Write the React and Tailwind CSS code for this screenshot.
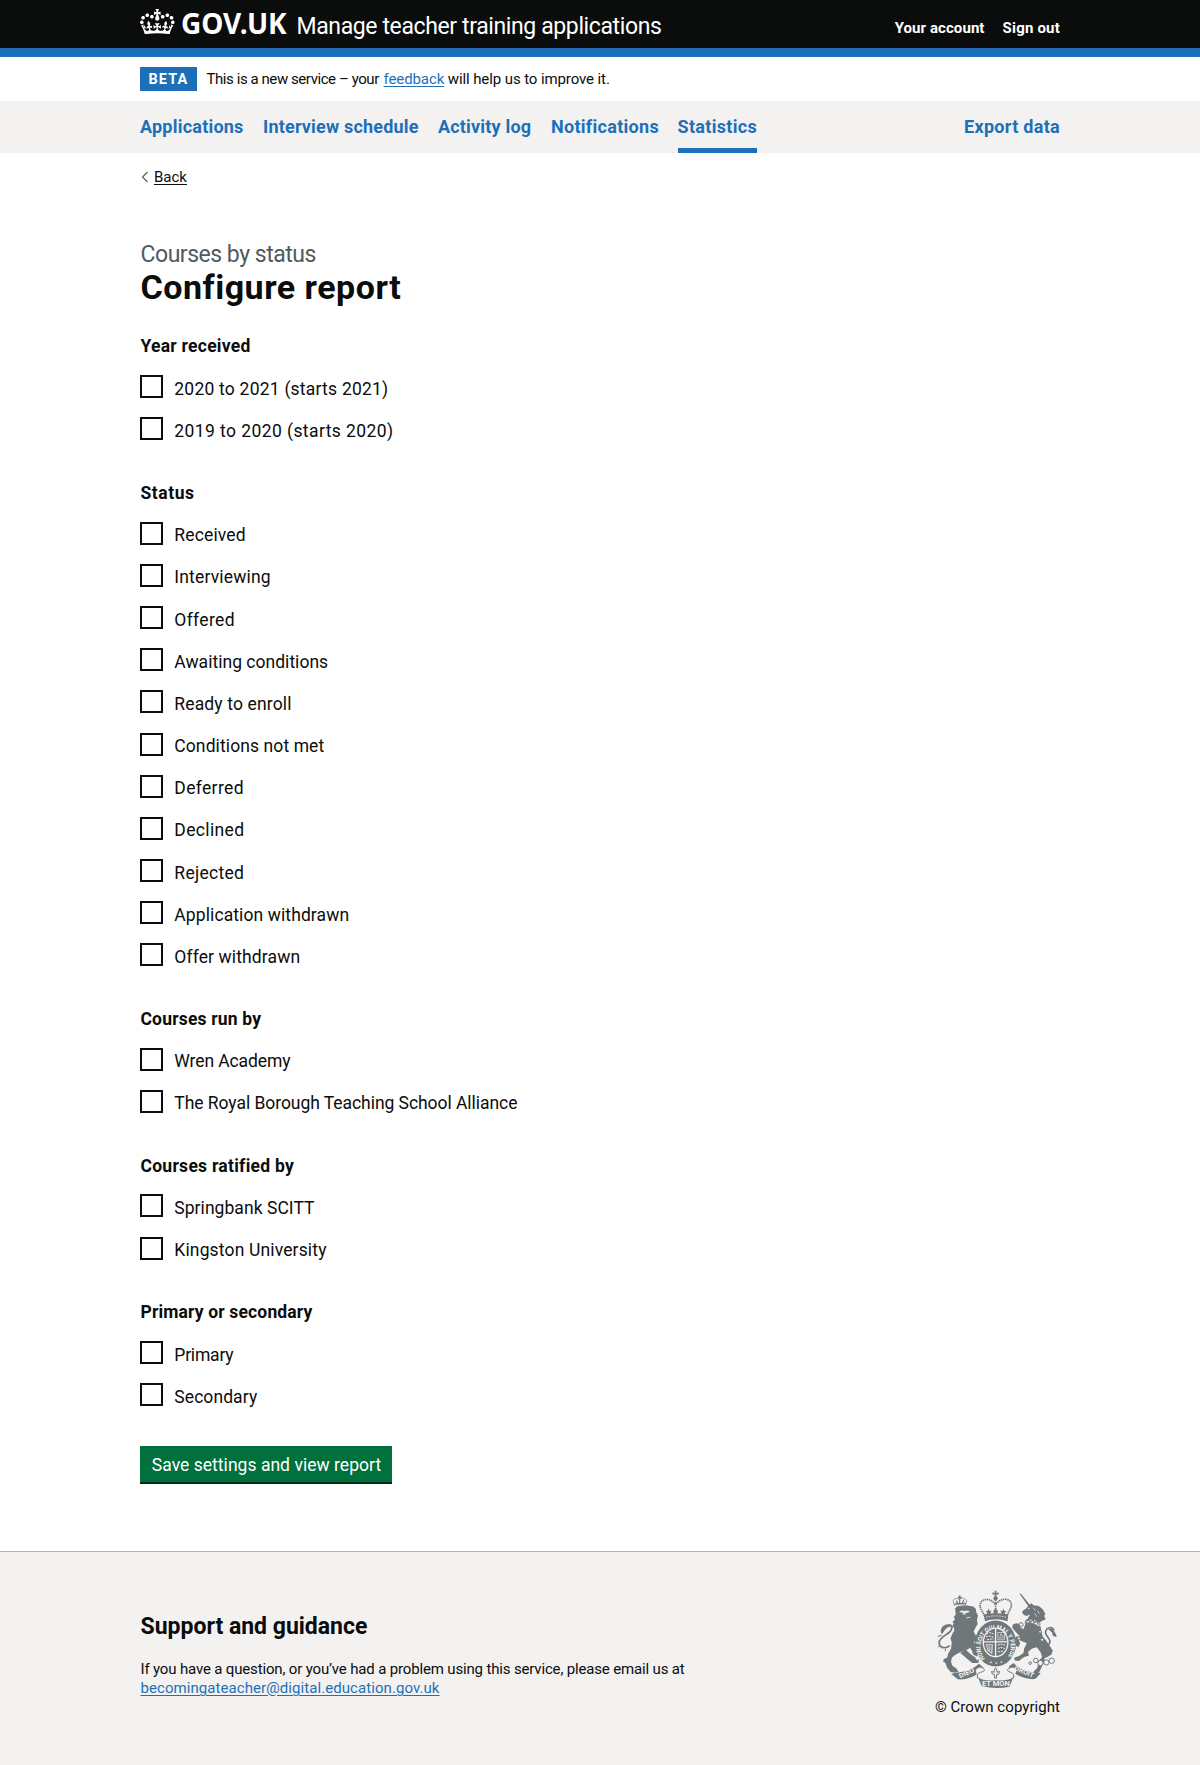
import React from "react";

const navItems = [
  { label: "Applications", cls: "w-[123px] tracking-[0.22px]" },
  { label: "Interview schedule", cls: "w-[175px] tracking-[0.18px]" },
  { label: "Activity log", cls: "w-[113px] tracking-[0.18px]" },
  { label: "Notifications", cls: "w-[126.5px] tracking-[0.28px]" },
  {
    label: "Statistics",
    cls: "w-[79.5px] tracking-[0.32px] shadow-[inset_0_-5px_0_#1d70b8]",
  },
];

const groups = [
  {
    legend: "Year received",
    cls: "tracking-[0.25px]",
    options: [
      ["2020 to 2021 (starts 2021)", "tracking-[0.22px]"],
      ["2019 to 2020 (starts 2020)", "tracking-[0.42px]"],
    ],
  },
  {
    legend: "Status",
    cls: "tracking-[0.54px]",
    options: [
      ["Received", "tracking-[0.15px]"],
      ["Interviewing", "tracking-[0.18px]"],
      ["Offered", "tracking-[0.35px]"],
      ["Awaiting conditions", "tracking-[0.02px]"],
      ["Ready to enroll", "tracking-[0.14px]"],
      ["Conditions not met", "tracking-[0.1px]"],
      ["Deferred", "tracking-[0.35px]"],
      ["Declined", "tracking-[0.35px]"],
      ["Rejected", "tracking-[0.3px]"],
      ["Application withdrawn", "tracking-[0.1px]"],
      ["Offer withdrawn", "tracking-[0.12px]"],
    ],
  },
  {
    legend: "Courses run by",
    cls: "tracking-[0.17px]",
    options: [
      ["Wren Academy", "tracking-[-0.1px]"],
      ["The Royal Borough Teaching School Alliance", "tracking-[-0.05px]"],
    ],
  },
  {
    legend: "Courses ratified by",
    cls: "tracking-[0.27px]",
    options: [
      ["Springbank SCITT", "tracking-[0.05px]"],
      ["Kingston University", "tracking-[0.15px]"],
    ],
  },
  {
    legend: "Primary or secondary",
    cls: "tracking-[0.15px]",
    options: [
      ["Primary", "tracking-[-0.2px]"],
      ["Secondary", "tracking-[0.08px]"],
    ],
  },
];

function Crown() {
  return (
    <svg
      viewBox="0 0 132 97"
      className="-mb-[2.5px] h-[25.5px] w-[34.6px] shrink-0"
      fill="currentColor"
      aria-hidden="true"
    >
      <path
        fillRule="evenodd"
        d="M25 30.2c3.5 1.5 7.7-.2 9.1-3.7 1.5-3.6-.2-7.8-3.9-9.2-3.6-1.4-7.6.3-9.1 3.9-1.4 3.5.3 7.5 3.9 9zM9 39.5c3.6 1.5 7.8-.2 9.2-3.7 1.5-3.6-.2-7.8-3.9-9.1-3.6-1.5-7.6.2-9.1 3.8-1.4 3.5.3 7.5 3.8 9zM4.4 57.2c3.5 1.5 7.7-.2 9.1-3.8 1.5-3.6-.2-7.7-3.9-9.1-3.5-1.5-7.6.3-9.1 3.8-1.4 3.5.3 7.6 3.9 9.1zm38.3-21.4c3.5 1.5 7.7-.2 9.1-3.8 1.5-3.6-.2-7.7-3.9-9.1-3.6-1.5-7.6.3-9.1 3.8-1.3 3.6.4 7.7 3.9 9.1zm64.4-5.6c-3.6 1.5-7.8-.2-9.1-3.7-1.5-3.6.2-7.8 3.8-9.2 3.6-1.4 7.7.3 9.2 3.9 1.3 3.5-.4 7.5-3.9 9zm15.9 9.3c-3.6 1.5-7.7-.2-9.1-3.7-1.5-3.6.2-7.8 3.7-9.1 3.6-1.5 7.7.2 9.2 3.8 1.5 3.5-.3 7.5-3.8 9zm4.7 17.7c-3.6 1.5-7.8-.2-9.2-3.8-1.5-3.6.2-7.7 3.9-9.1 3.6-1.5 7.7.3 9.2 3.8 1.3 3.5-.4 7.6-3.9 9.1zM89.3 35.8c-3.6 1.5-7.8-.2-9.2-3.8-1.4-3.6.2-7.7 3.9-9.1 3.6-1.5 7.7.3 9.2 3.8 1.4 3.6-.3 7.7-3.9 9.1zM69.7 17.7l8.9 4.7V9.3l-8.9 2.8c-.2-.3-.5-.6-.9-.9L72.4 0H59.6l3.5 11.2c-.3.3-.6.5-.9.9l-8.8-2.8v13.1l8.8-4.7c.3.3.6.7.9.9l-5 15.4v.1c-.2.8-.4 1.6-.4 2.4 0 4.1 3.1 7.5 7 8.1h.2c.3 0 .7.1 1 .1.4 0 .7 0 1-.1h.2c4-.6 7.1-4.1 7.1-8.1 0-.8-.1-1.7-.4-2.4V34l-5.1-15.4c.4-.2.7-.6 1-.9zM66 92.8c16.9 0 32.8 1.1 47.1 3.2 4-16.9 8.9-26.7 14-33.5l-9.6-3.4c1 4.9 1.1 7.2 0 10.2-1.5-1.4-3-4.3-4.2-8.7L108.6 76c2.8-2 5-3.2 7.5-3.3-4.4 9.4-10 11.9-13.6 11.2-4.3-.8-6.3-4.6-5.6-7.9 1-4.7 5.7-5.9 8-.5 4.3-8.7-3-11.4-7.6-8.8 7.1-7.2 7.9-13.5 2.1-21.1-8 6.1-8.1 12.3-4.5 20.8-4.7-5.4-12.1-2.5-9.5 6.2 3.4-5.2 7.9-2 7.2 3.1-.6 4.3-6.4 7.8-13.5 7.2-10.3-.9-10.9-8-11.2-13.8 2.5-.5 7.1 1.8 11 7.3L80.2 60c-4.1 4.4-8 5.3-12.3 5.4 1.4-4.4 8-11.6 8-11.6H55.5s6.4 7.2 7.9 11.6c-4.2-.1-8-1-12.3-5.4l1.4 16.4c3.9-5.5 8.5-7.7 10.9-7.3-.3 5.8-.9 12.8-11.1 13.8-7.2.6-12.9-2.9-13.5-7.2-.7-5 3.8-8.3 7.1-3.1 2.7-8.7-4.6-11.6-9.4-6.2 3.7-8.5 3.6-14.7-4.6-20.8-5.8 7.6-5 13.9 2.2 21.1-4.7-2.6-11.9.1-7.7 8.8 2.3-5.5 7.1-4.2 8.1.5.7 3.3-1.3 7.1-5.7 7.9-3.5.7-9-1.8-13.5-11.2 2.5.1 4.7 1.3 7.5 3.3l-4.7-15.4c-1.2 4.4-2.7 7.2-4.3 8.7-1.1-3-.9-5.3 0-10.2l-9.5 3.4c5 6.9 9.9 16.7 14 33.5 14.8-2.1 30.8-3.2 47.7-3.2z"
      />
    </svg>
  );
}

function RoyalArms() {
  const grey = "#6f777b";
  const light = "#f3f2f1";
  return (
    <svg
      viewBox="50 150 362 298"
      className="h-[99px] w-[120.5px]"
      fill={grey}
      stroke="none"
      aria-hidden="true"
    >
      {/* Lion */}
      <path d="M104 206 112 198 136 196 158 200 166 206 168 218 173 227 170 240 172 252 166 262 160 276 166 286 180 292 188 300 182 308 170 304 160 306 168 318 180 330 176 344 170 350 158 344 156 336 150 324 136 332 118 338 104 346 94 354 92 366 96 378 108 386 114 396 104 399 90 396 80 384 74 368 68 366 70 358 80 354 84 340 92 326 94 308 90 296 96 282 102 272 100 262 94 262 100 250 96 246 104 238 100 232 106 224z" />
      <path d="M120 340 136 330 154 346 164 352 170 362 176 356 174 370 156 370 148 364 134 352z" />
      <path d="M118 214l10-3 3 3 8-2 9 2-4 4-8 1-4 4-6-6-8 1z" fill={light} />
      <path d="M126 222l10 1M138 234l12-2" stroke={light} strokeWidth="2.5" fill="none" />
      <path
        d="M88 318C70 330 56 322 56 308 56 294 76 286 86 278 98 268 96 254 84 255"
        fill="none"
        stroke={grey}
        strokeWidth="5"
      />
      <path d="M62 280C58 266 68 254 82 253L92 258 80 264 72 272 66 282z" />
      <path d="M52 290l12-4M58 318l-6 4M76 326l-2 8" stroke={grey} strokeWidth="3" fill="none" />
      {/* Lion's crown */}
      <path d="M102 196 98 182Q104 172 116 178 128 170 139 182L136 194Q118 190 102 196z" fill={light} stroke={grey} strokeWidth="3" strokeDasharray="4 1.5" />
      <path d="M103 192l34-2M118 166v26M112 172h12M108 182l4 8M130 180l-4 9" stroke={grey} strokeWidth="3.5" fill="none" />

      {/* Unicorn */}
      <path d="M297 160 303 162 330 196 325 200z" />
      <path d="M326 196 334 190 340 196 356 198 368 208 376 222 372 228 377 238 364 244 356 250 362 262 364 276 368 290 378 302 388 316 398 332 394 344 382 352 372 356 376 368 368 374 360 392 352 404 344 404 340 396 352 384 354 366 366 352 362 338 350 322 336 326 324 336 326 348 312 352 296 364 284 362 282 354 298 348 310 340 312 326 320 310 306 304 296 300 300 312 294 322 284 316 282 300 288 290 300 290 290 280 276 264 278 254 288 250 298 252 300 262 310 268 314 256 320 240 330 224 318 228 308 222 306 214 318 206z" />
      <path d="M318 240q20-8 42 10l-2 12q-24-18-44-12z" fill={light} stroke={grey} strokeWidth="2.5" />
      <path d="M318 246l8-8 4 9 9-8 3 10 10-5 2 11" fill="none" stroke={grey} strokeWidth="4" />
      <circle cx="326" cy="206" r="2.2" fill={light} />
      <path d="M340 204l6 8M352 212l6 10M344 220l6 10" stroke={light} strokeWidth="2" />
      <path
        d="M380 318C404 304 376 290 376 278 378 262 396 258 402 272"
        fill="none"
        stroke={grey}
        strokeWidth="5"
      />
      <path d="M384 268Q402 260 410 292L398 288 396 278z" />
      <g fill={light} stroke={grey} strokeWidth="3">
        <circle cx="347" cy="362" r="7" />
        <circle cx="361" cy="370" r="8" />
        <circle cx="379" cy="368" r="8" />
        <circle cx="395" cy="363" r="8" />
        <circle cx="366" cy="300" r="4.5" />
        <circle cx="360" cy="276" r="4" />
        <circle cx="303" cy="254" r="6" />
        <circle cx="296" cy="296" r="4.5" />
        <circle cx="330" cy="370" r="4" />
      </g>

      {/* Crown */}
      <path d="M194 228 182 206Q176 184 194 179 210 176 222 192 236 176 256 178 276 182 272 204L258 230Q226 220 194 228z" fill={light} />
      <path
        d="M193 228 181 206Q175 184 194 179 212 176 226 194 240 176 258 178 278 182 272 204L260 228"
        fill="none"
        stroke={grey}
        strokeWidth="5"
        strokeDasharray="4.5 2"
      />
      <path d="M226 180v46" stroke={grey} strokeWidth="5" strokeDasharray="4 2" />
      <circle cx="226" cy="175" r="6.5" />
      <path d="M223 152h6l-1 7 7-2v8l-7-2 1 8h-6l1-8-7 2v-8l7 2z" />
      <path d="M204 206l5 8 5-3-4 9 2 6h-14l3-7-5-6 6 1zM226 204l7 9-3 12h-8l-3-12zM250 206l-4 8-6-3 4 9-2 6h14l-3-7 6-6-6 1z" />
      <path d="M190 224Q226 216 264 224L262 244Q226 232 194 244z" />
      <path d="M197 232Q226 224 257 232" fill="none" stroke={light} strokeWidth="2.5" strokeDasharray="5 3" />

      {/* Garter */}
      <ellipse cx="226" cy="311" rx="62" ry="69" />
      <ellipse cx="226" cy="308" rx="39" ry="45" fill={light} />
      <defs>
        <path id="garter" d="M194 357A45 52 0 1 1 262 353" />
      </defs>
      <text fill={light} fontSize="20" fontWeight="700" fontFamily="Roboto, sans-serif">
        <textPath href="#garter" textLength="222" lengthAdjust="spacingAndGlyphs">
          HONI SOIT QUI MAL Y PENSE
        </textPath>
      </text>
      <circle cx="212" cy="368" r="2.5" fill={light} />
      <circle cx="228" cy="370" r="2.5" fill={light} />
      <circle cx="243" cy="367" r="2.5" fill={light} />
      {/* Quartered shield */}
      <ellipse cx="226" cy="308" rx="35" ry="41" />
      <path d="M226 267v82M191 306h70" stroke={light} strokeWidth="4" />
      <path
        d="M198 282l10-4 12 4M197 291l9-3 14 4M200 299l20-2M233 316l10-3 12 3M233 326l9-3 12 3M233 336l16-2"
        fill="none"
        stroke={light}
        strokeWidth="3"
        strokeDasharray="6 2.5"
      />
      <path d="M233 278h20v22h-20zM238 296l4-14 8 10-9 4" fill="none" stroke={light} strokeWidth="2" />
      <path d="M197 314l20 0-2 28Q200 334 197 314M203 316v18M208 316v22M213 316v24" fill="none" stroke={light} strokeWidth="2" />

      {/* Motto scroll */}
      <path d="M92 402 112 398Q150 396 176 372L190 384 184 394Q150 422 112 419z" />
      <path d="M266 380 280 370Q306 398 362 400L348 416 340 419Q296 416 270 390z" />
      <path
        d="M166 390Q176 376 190 386 198 394 180 398 168 402 172 416M290 390Q280 376 266 386 256 394 272 398 284 402 280 416"
        fill={light}
        stroke={grey}
        strokeWidth="3"
      />
      <path d="M172 410Q180 424 226 422 272 424 280 410L268 441Q226 450 184 439z" />
      <path d="M226 384q6 8 4 14l8-3-2 8-7 2v10h-6v-10l-7-2-2-8 8 3q-2-6 4-14z" fill={light} stroke={grey} strokeWidth="3" />
      <g fill={light} fontWeight="700" fontFamily="Roboto, sans-serif">
        <text x="119" y="416" fontSize="19" textLength="49" lengthAdjust="spacingAndGlyphs" transform="rotate(-24 119 416)">
          DIEU
        </text>
        <text x="185" y="440" fontSize="20" textLength="84" lengthAdjust="spacingAndGlyphs">
          ET MON
        </text>
        <text x="281" y="391" fontSize="19" textLength="62" lengthAdjust="spacingAndGlyphs" transform="rotate(22 281 391)">
          DROIT
        </text>
      </g>
    </svg>
  );
}

function CheckboxGroup({ legend, cls, options }) {
  return (
    <fieldset className="mb-[21.5px]">
      <legend className={"mb-[16.8px] pl-[0.5px] text-[17.5px] leading-[24px] font-bold " + cls}>
        {legend}
      </legend>
      {options.map(([label, tracking]) => (
        <label key={label} className="flex h-[42.17px] items-start">
          <input
            type="checkbox"
            className="h-[23px] w-[23px] shrink-0 appearance-none border-2 border-[#0b0c0c] bg-white"
          />
          <span
            className={
              "mt-[2.5px] ml-[11.3px] text-[17.5px] leading-[23px] whitespace-nowrap " + tracking
            }
          >
            {label}
          </span>
        </label>
      ))}
    </fieldset>
  );
}

export default function App() {
  return (
    <div className="flex min-h-[1765px] flex-col bg-white font-['Roboto',sans-serif] text-[#0b0c0c]">
      <header className="h-[57px] border-b-[9px] border-[#1d70b8] bg-[#0b0c0c] text-white">
        <div className="mx-auto flex w-[920px] justify-between whitespace-nowrap">
          <div className="flex items-baseline pt-[6px]">
            <Crown />
            <span className="ml-[6.5px] w-[115.4px] font-['Noto_Sans',sans-serif] text-[28px] leading-[34px] font-bold tracking-[-0.1px]">
              GOV.UK
            </span>
            <span className="text-[23px] leading-[24px] tracking-[-0.38px]">
              Manage teacher training applications
            </span>
          </div>
          <div className="flex gap-[18px] pt-[18px] text-[15px] leading-[20px] font-bold">
            <a href="#" className="tracking-[0.08px]">Your account</a>
            <a href="#" className="tracking-[0.2px]">Sign out</a>
          </div>
        </div>
      </header>

      <div className="mx-auto flex h-[44px] w-[920px] items-start pt-[10px] text-[15px] whitespace-nowrap">
        <strong className="h-[24px] w-[57px] bg-[#1d70b8] pl-[8.5px] text-[14.5px] leading-[26px] tracking-[1.07px] text-white">
          BETA
        </strong>
        <p className="ml-[9.5px] leading-[25px]">
          <span className="inline-block w-[177px] tracking-[-0.43px]">
            This is a new service – your
          </span>
          <a href="#" className="tracking-[-0.1px] text-[#1d70b8] underline underline-offset-2">
            feedback
          </a>
          <span className="tracking-[-0.1px]"> will help us to improve it.</span>
        </p>
      </div>

      <nav className="h-[52px] bg-[#f3f2f1] text-[18px] leading-[52px] font-bold text-[#1d70b8]">
        <div className="mx-auto flex w-[920px] whitespace-nowrap">
          {navItems.map(({ label, cls }) => (
            <a key={label} href="#" className={"block h-[52px] " + cls}>
              {label}
            </a>
          ))}
          <a href="#" className="ml-auto tracking-[0.3px]">Export data</a>
        </div>
      </nav>

      <main className="mx-auto w-[920px] pt-[13.5px]">
        <a href="#" className="flex h-[20px] items-center text-[15px] leading-[20px]">
          <svg viewBox="0 0 8 12" className="ml-px h-[12px] w-[8px]" fill="none" aria-hidden="true">
            <path d="M6.5 1 1.5 6l5 5" stroke="#505a5f" strokeWidth="1.1" />
          </svg>
          <span className="ml-[5px] underline underline-offset-2">Back</span>
        </a>

        <p className="mt-[54.3px] pl-[0.5px] text-[23px] leading-[28px] tracking-[-0.48px] text-[#505a5f]">
          Courses by status
        </p>
        <h1 className="mb-[29.6px] pl-[0.5px] text-[34px] leading-[36px] font-bold tracking-[0.5px]">
          Configure report
        </h1>

        <form>
          {groups.map((g) => (
            <CheckboxGroup key={g.legend} {...g} />
          ))}
          <button
            type="button"
            className="-mt-[0.7px] block h-[38px] w-[252px] border-b-2 border-[#002d18] bg-[#00703c] pt-[2px] pl-px text-[17.5px] leading-[34px] tracking-[0.03px] text-white"
          >
            Save settings and view report
          </button>
        </form>
      </main>

      <footer className="mt-auto h-[214px] border-t border-[#b1b4b6] bg-[#f3f2f1]">
        <div className="mx-auto flex w-[920px] justify-between">
          <div className="pt-[61px] pl-[0.5px]">
            <h2 className="text-[23px] leading-[28px] font-bold">Support and guidance</h2>
            <p className="mt-[19px] text-[15px] leading-[19.2px] whitespace-nowrap">
              <span className="tracking-[-0.16px]">
                If you have a question, or you’ve had a problem using this service, please email us at
              </span>
              <br />
              <a href="#" className="tracking-[0.07px] text-[#1d70b8] underline underline-offset-2">
                becomingateacher@digital.education.gov.uk
              </a>
            </p>
          </div>
          <div className="flex flex-col items-end pt-[38px] text-[15px] leading-[20px]">
            <div className="mr-[2.5px]">
              <RoyalArms />
            </div>
            <p className="mt-[7.5px] tracking-[0.05px]">© Crown copyright</p>
          </div>
        </div>
      </footer>
    </div>
  );
}
